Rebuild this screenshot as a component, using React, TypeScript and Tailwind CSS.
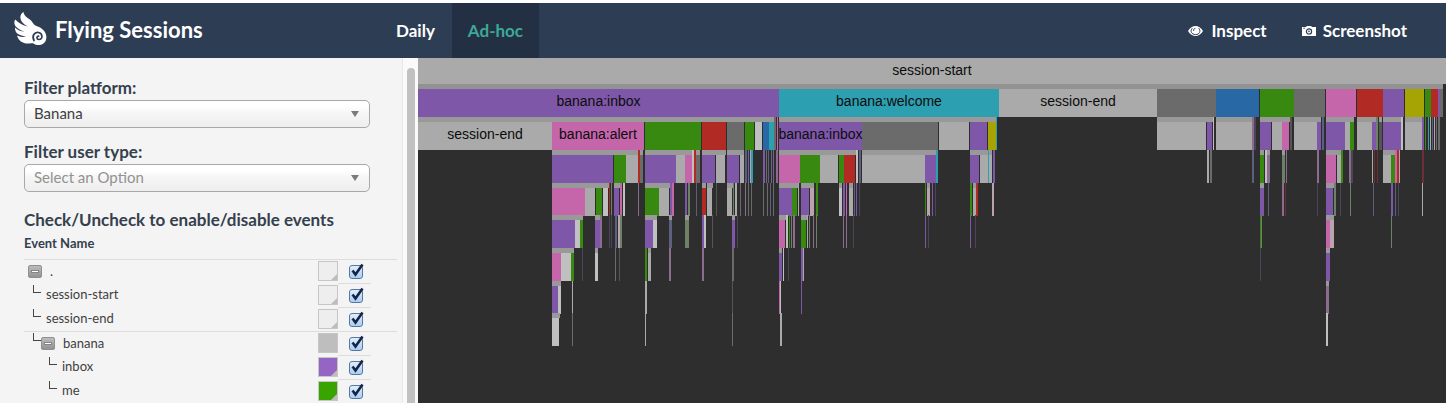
import React, { useState } from "react";

const COLORS = {
  l: "#aaaaaa",
  d: "#6b6b6b",
  p: "#7e57a8",
  k: "#c566ab",
  g: "#37890f",
  r: "#b12a24",
  b: "#2868a5",
  t: "#2c9fb1",
  y: "#a5a404",
  w: "#c0c0c0",
  m: "#8c6c8c",
  s: "#5c5f80",
  o: "#6d8068",
  f: "#4c4459",
  x: "#555555",
  e: "#6e2e36",
  c: "#b9a3ad",
};

type Color = keyof typeof COLORS;
type Bar = [start: number, end: number, color: Color, label?: string];

const DOMAIN = 1028;
const ROW_TOPS = [0, 31, 64, 97, 130, 162, 195, 228, 260];

/* One list per depth; start and end are session shares out of DOMAIN. */
const LEVELS: Bar[][] = [
  [[0, 1028, "l", "session-start"]],
  [
    [0, 361, "p", "banana:inbox"], [361, 581, "t", "banana:welcome"], [581, 739, "l", "session-end"],
    [739, 798, "d"], [798, 841, "b"], [842, 876, "g"], [876, 907, "d"], [908, 938, "k"], [939, 965, "r"],
    [965, 986, "p"], [987, 1006, "y"], [1007, 1013, "g"], [1013, 1020, "r"], [1020, 1022, "p"], [1022, 1025, "d"],
  ],
  [
    [0, 134, "l", "session-end"], [134, 226, "k", "banana:alert"], [227, 283, "g"], [284, 308, "r"], [309, 326, "d"],
    [327, 336, "g"], [337, 344, "w"], [345, 351, "b"], [351, 356, "t"], [356, 358, "d"], [359, 360, "k"],
    [361, 444, "p", "banana:inbox"], [444, 520, "d"], [521, 551, "l"], [552, 569, "p"], [570, 578, "y"], [578, 579, "t"],
    [739, 788, "l"], [789, 794, "p"], [795, 796, "w"], [798, 834, "l"], [834, 836, "m"], [836, 838, "f"],
    [842, 853, "p"], [854, 864, "l"], [864, 871, "k"], [872, 874, "x"], [876, 899, "l"], [899, 903, "p"], [904, 906, "s"],
    [908, 927, "p"], [927, 932, "l"], [932, 936, "g"], [939, 954, "l"], [954, 958, "p"], [958, 960, "o"], [961, 964, "x"],
    [965, 983, "p"], [983, 985, "w"], [987, 1004, "l"], [1004, 1006, "p"], [1007, 1008, "g"], [1010, 1011, "t"],
    [1012, 1013, "l"], [1014, 1015, "s"], [1016, 1017, "c"], [1018, 1019, "d"], [1020, 1022, "d"],
  ],
  [
    [134, 195, "p"], [196, 208, "g"], [208, 220, "l"], [220, 222, "r"], [222, 225, "d"],
    [227, 258, "p"], [258, 267, "l"], [267, 274, "k"], [274, 276, "w"], [276, 278, "r"], [278, 282, "d"],
    [284, 297, "p"], [298, 307, "l"], [309, 321, "p"], [322, 326, "l"], [327, 329, "s"], [330, 331, "p"],
    [332, 333, "l"], [333, 335, "t"], [345, 347, "p"], [348, 349, "d"], [350, 351, "s"], [353, 354, "d"], [355, 356, "p"], [358, 360, "m"],
    [361, 382, "k"], [382, 402, "g"], [402, 420, "l"], [421, 426, "g"], [426, 437, "r"], [438, 440, "w"], [441, 443, "s"],
    [444, 507, "l"], [507, 518, "p"], [518, 520, "t"], [552, 561, "p"], [562, 570, "l"], [570, 571, "t"], [571, 574, "l"], [575, 577, "p"],
    [789, 791, "l"], [792, 794, "d"], [834, 836, "s"], [842, 846, "g"], [847, 849, "w"], [849, 852, "m"],
    [864, 867, "o"], [868, 869, "m"], [899, 901, "m"], [908, 918, "k"], [919, 923, "l"], [923, 925, "g"],
    [931, 933, "m"], [933, 935, "f"], [954, 955, "l"], [956, 957, "e"], [959, 960, "e"],
    [965, 973, "l"], [973, 977, "g"], [977, 979, "k"], [979, 981, "r"], [981, 982, "l"], [1004, 1006, "e"],
  ],
  [
    [134, 167, "k"], [167, 177, "l"], [178, 184, "g"], [185, 190, "w"], [191, 192, "r"], [193, 194, "o"],
    [196, 201, "p"], [202, 204, "k"], [205, 207, "w"], [220, 221, "m"],
    [227, 241, "g"], [241, 251, "l"], [252, 254, "p"], [254, 256, "k"], [267, 269, "p"], [270, 272, "o"],
    [278, 279, "s"], [284, 288, "r"], [289, 294, "l"], [298, 299, "x"], [309, 314, "l"], [315, 316, "o"], [317, 319, "l"],
    [322, 323, "d"], [327, 328, "m"], [330, 331, "d"], [333, 334, "d"], [345, 346, "d"], [349, 350, "d"], [352, 353, "s"], [355, 356, "d"],
    [361, 374, "p"], [374, 379, "g"], [380, 381, "l"], [383, 391, "p"], [392, 396, "c"], [398, 400, "g"],
    [421, 424, "w"], [425, 427, "p"], [428, 429, "k"], [431, 435, "l"], [436, 437, "s"], [438, 439, "p"], [441, 442, "f"],
    [507, 508, "g"], [509, 512, "c"], [514, 515, "p"], [517, 518, "f"], [552, 554, "g"], [555, 558, "l"], [558, 560, "r"], [574, 576, "c"],
    [842, 846, "p"], [850, 851, "s"], [864, 866, "m"], [867, 868, "e"], [899, 900, "f"], [908, 915, "p"], [916, 918, "o"],
    [922, 923, "f"], [932, 933, "o"], [955, 956, "s"], [973, 975, "p"], [977, 978, "s"], [980, 981, "f"], [1004, 1005, "l"],
  ],
  [
    [134, 157, "p"], [157, 162, "w"], [162, 165, "g"], [177, 182, "p"], [182, 184, "m"], [191, 192, "f"], [193, 194, "f"],
    [197, 199, "s"], [200, 202, "c"], [202, 204, "o"], [227, 235, "p"], [235, 239, "w"], [251, 254, "s"], [267, 271, "o"],
    [284, 286, "p"], [286, 288, "w"], [294, 295, "x"], [314, 317, "p"], [319, 320, "f"],
    [361, 367, "k"], [368, 370, "w"], [371, 372, "g"], [373, 374, "o"], [375, 377, "m"],
    [383, 388, "g"], [389, 390, "l"], [391, 392, "o"], [395, 396, "m"], [398, 399, "o"],
    [425, 426, "m"], [428, 429, "m"], [435, 436, "f"], [507, 508, "p"], [510, 511, "f"], [552, 553, "p"], [557, 558, "f"],
    [842, 843, "g"], [843, 844, "o"], [908, 912, "k"], [912, 916, "c"], [973, 974, "o"],
  ],
  [
    [134, 143, "k"], [143, 153, "w"], [153, 156, "g"], [164, 165, "f"], [177, 180, "w"], [197, 198, "d"], [201, 202, "x"],
    [227, 229, "g"], [230, 233, "l"], [251, 253, "m"], [284, 286, "m"], [314, 316, "d"],
    [361, 364, "p"], [365, 366, "w"], [370, 371, "f"], [383, 385, "p"], [385, 386, "l"], [842, 843, "f"], [908, 912, "p"],
  ],
  [
    [134, 140, "p"], [140, 143, "w"], [154, 155, "l"], [227, 229, "l"], [314, 315, "x"],
    [361, 362, "k"], [362, 363, "w"], [383, 384, "p"], [908, 911, "m"],
  ],
  [[134, 141, "w"], [154, 155, "d"], [227, 228, "l"], [314, 315, "d"], [362, 364, "l"], [908, 910, "w"]],
];

const pct = (n: number) => `${(n / DOMAIN) * 100}%`;

function SessionChart() {
  return (
    <svg className="block h-[345px] w-full font-['Liberation_Sans',sans-serif] text-[14px]" shapeRendering="crispEdges" role="img" aria-label="Session events">
      {LEVELS.map((bars, depth) => {
        const top = ROW_TOPS[depth];
        const height = depth === 0 ? 26 : 28;
        return (
          <g key={depth}>
            {bars.map(([start, end, color]) => (
              <React.Fragment key={start}>
                {depth > 0 && (
                  <rect
                    x={pct(start)}
                    y={top - 5}
                    width={pct(Math.min(end + (end - start > 4 ? 1 : 0), DOMAIN) - start)}
                    height={5}
                    fill={depth === 1 ? "#929292" : end - start > 2 ? "#9a999a" : COLORS[color]}
                  />
                )}
                <rect x={pct(start)} y={top} width={pct(end - start)} height={height} fill={COLORS[color]} />
              </React.Fragment>
            ))}
            {bars.map(
              ([start, end, , label]) =>
                label && (
                  <text key={start} x={pct((start + end) / 2)} y={top + 17} textAnchor="middle" fill="#0c0c0c">
                    {label}
                  </text>
                ),
            )}
          </g>
        );
      })}
    </svg>
  );
}

function WingLogo() {
  return (
    <svg className="h-[34px] w-[34px]" viewBox="0 0 34 34" aria-hidden="true">
      <path
        d="M10.500 0C8 1.500 7 4 7.500 6.500C8 10 11 12.500 15 14.500C10 13.500 5 10.500 2.200 7.500C-.5 12 3 17 11.500 19.500C8 19.500 4.500 18 2 15.500C1.500 21 6 24 13 24.200C10 25.400 7 25 4 23.500C5.500 29 10 32 16.500 31.500C18.500 31.300 19.500 31 20.500 31.500C25 34.500 32 33 33.200 27C34.500 20.500 29 15.500 23.500 14C21 13.300 20 11 18.500 9C16 6 11 5 10.500 0Z"
        fill="#fff"
      />
      <path
        d="M21 28.500C18.500 24 21.500 19.800 25.500 20.500C30 21.500 30 27.500 26 27.500C23.500 27.300 23.300 24.300 25.600 24.200"
        fill="none"
        stroke="#2d3d54"
        strokeWidth="1.700"
        strokeLinecap="round"
      />
    </svg>
  );
}

function EyeIcon() {
  return (
    <svg className="h-3 w-[15px]" viewBox="0 0 15 12" aria-hidden="true">
      <path d="M0 6C2 2.700 4.700 1 7.500 1S13 2.700 15 6C13 9.300 10.300 11 7.500 11S2 9.300 0 6Z" fill="#fff" />
      <path d="M4.300 3.200C1.800 6 3.500 9.500 7.500 9.600S13.200 6 10.700 3.200" fill="none" stroke="#2d3d54" strokeWidth="1" />
      <path d="M7.400 3.300C5.800 3.500 5.300 5 5.700 6" fill="none" stroke="#2d3d54" strokeWidth="1" />
    </svg>
  );
}

function CameraIcon() {
  return (
    <svg className="h-3 w-[14px]" viewBox="0 0 14 12" aria-hidden="true">
      <path d="M0 2H4L5 1H9L10 2H14V11H0Z" fill="#fff" />
      <circle cx="7" cy="6.400" r="2.600" fill="none" stroke="#2d3d54" strokeWidth="1.200" />
      <circle cx="7" cy="6.400" r=".8" fill="#2d3d54" />
      <path d="M1.200 3.200h2" stroke="#2d3d54" strokeWidth=".8" />
    </svg>
  );
}

function Select({ id, label, options, muted }: { id: string; label: string; options: string[]; muted?: boolean }) {
  return (
    <div className="flex flex-col">
      <label htmlFor={id} className="text-[17px] leading-6 font-bold text-[#34404e]">
        {label}
      </label>
      <div className="relative">
        <select
          id={id}
          className={`block h-7 w-full appearance-none rounded-[5px] border border-[#a8a8a8] bg-linear-to-b from-white from-20% via-[#f5f5f5] via-50% to-[#eeeeee] pr-8 pb-[2px] pl-[9px] text-[15px] ${muted ? "text-[#929292]" : "text-[#404040]"}`}
        >
          {options.map((o) => (
            <option key={o}>{o}</option>
          ))}
        </select>
        <svg className="pointer-events-none absolute top-[11px] right-[11px] h-[6px] w-2" viewBox="0 0 8 6" aria-hidden="true">
          <path d="M0 0H8L4 6Z" fill="#7a7a7a" />
        </svg>
      </div>
    </div>
  );
}

function Toggle({ name }: { name: string }) {
  return (
    <button aria-label={`Collapse ${name}`} className="flex h-[13px] w-[14px] items-center justify-center rounded-[2px] border border-[#8f8f8f] bg-linear-to-b from-[#bcbcbc] to-[#939393]">
      <span className="h-[3px] w-2 border border-[#858585] bg-white" />
    </button>
  );
}

const Branch = () => <span className="mb-3 h-[8px] w-[8px] border-b border-l border-[#444444]" />;

type EventRow = { name: string; indent: string; textGap: string; group: boolean; leaf: boolean; swatch: string };

const EVENTS: EventRow[] = [
  { name: ".", indent: "pl-1", textGap: "pl-2", group: true, leaf: false, swatch: "bg-[#eeeeee]" },
  { name: "session-start", indent: "pl-[9px]", textGap: "pl-[5px]", group: false, leaf: true, swatch: "bg-[#eeeeee]" },
  { name: "session-end", indent: "pl-[9px]", textGap: "pl-[5px]", group: false, leaf: true, swatch: "bg-[#eeeeee]" },
  { name: "banana", indent: "pl-[9px]", textGap: "pl-2", group: true, leaf: true, swatch: "bg-[#bebebe]" },
  { name: "inbox", indent: "pl-[25px]", textGap: "pl-[5px]", group: false, leaf: true, swatch: "bg-[#9565c4]" },
  { name: "me", indent: "pl-[25px]", textGap: "pl-[5px]", group: false, leaf: true, swatch: "bg-[#39a400]" },
];

function EventTable() {
  const [enabled, setEnabled] = useState<Record<string, boolean>>(() => Object.fromEntries(EVENTS.map((e) => [e.name, true])));
  return (
    <table className="w-full table-fixed border-collapse text-[13px] text-[#3f3f3f]">
      <colgroup>
        <col />
        <col className="w-5" />
        <col className="w-[33px]" />
        <col className="w-[26px]" />
      </colgroup>
      <thead>
        <tr>
          <th colSpan={4} className="h-[27px] p-0 pb-[3px] text-left font-bold text-[#34404e]">
            Event Name
          </th>
        </tr>
      </thead>
      <tbody>
        {EVENTS.map((e) => {
          const line = e.group ? "border-t border-[#dcdcdc]" : "";
          return (
            <tr key={e.name} className="h-6">
              <td className={`p-0 ${line}`}>
                <div className={`flex h-[23px] items-center ${e.indent}`}>
                  {e.leaf && <Branch />}
                  {e.group && <Toggle name={e.name} />}
                  <label htmlFor={`event-${e.name}`} className={e.textGap}>
                    {e.name}
                  </label>
                </div>
              </td>
              <td className={`p-0 ${line}`}>
                <button aria-label={`Colour of ${e.name}`} className={`relative block h-5 w-5 border border-[#c6c6c6] ${e.swatch}`}>
                  <svg className="absolute right-0 bottom-0 h-[6px] w-[6px]" viewBox="0 0 6 6" aria-hidden="true">
                    <path d="M6 0V6H0Z" fill="#bdbdbd" />
                  </svg>
                </button>
              </td>
              <td className="border-t border-[#dcdcdc] p-0 pt-px">
                <div className="relative ml-[11px] h-[14px] w-[14px]">
                  <input
                    id={`event-${e.name}`}
                    type="checkbox"
                    checked={enabled[e.name]}
                    onChange={(ev) => setEnabled({ ...enabled, [e.name]: ev.target.checked })}
                    className="block h-[14px] w-[14px] appearance-none rounded-[3px] border border-[#56779f] bg-linear-to-b from-[#e4eefa] to-[#a9cdf3]"
                  />
                  {enabled[e.name] && (
                    <svg className="pointer-events-none absolute -top-[2px] left-0 h-4 w-4" viewBox="0 0 16 16" aria-hidden="true">
                      <path d="M3.500 7.500L6.500 11.500L13.500 1.500" fill="none" stroke="#14254a" strokeWidth="2.600" />
                    </svg>
                  )}
                </div>
              </td>
              <td className={`p-0 ${line}`} />
            </tr>
          );
        })}
      </tbody>
    </table>
  );
}

export default function App() {
  return (
    <div className="flex h-screen flex-col overflow-hidden bg-white pt-[3px] font-[Lato,sans-serif]">
      <header className="flex h-[55px] shrink-0 items-stretch bg-[#2d3d54] text-white">
        <a href="#" className="flex w-[379px] items-center gap-2 pb-1 pl-[13px] text-[22px] font-bold">
          <WingLogo />
          <span className="pt-[2px]">Flying Sessions</span>
        </a>
        <nav className="flex flex-1 text-[17px] font-bold">
          <a href="#daily" className="flex items-center px-[17px]">
            Daily
          </a>
          <a href="#adhoc" className="flex items-center bg-[#233044] px-4 text-[#3da896]">
            Ad-hoc
          </a>
          <div className="ml-auto flex gap-[35px] pr-[39px]">
            <a href="#inspect" className="flex items-center gap-2">
              <EyeIcon />
              Inspect
            </a>
            <a href="#screenshot" className="flex items-center gap-[7px]">
              <CameraIcon />
              Screenshot
            </a>
          </div>
        </nav>
      </header>
      <main className="flex min-h-0 flex-1">
        <aside className="flex w-[418px] shrink-0 overflow-hidden bg-[#f4f4f4]">
          <div className="flex flex-1 flex-col pt-[18px] pl-6">
            <div className="flex flex-col gap-3 pr-8">
              <Select id="platform" label="Filter platform:" options={["Banana"]} />
              <Select id="user-type" label="Filter user type:" options={["Select an Option"]} muted />
            </div>
            <h2 className="pt-4 text-[17px] leading-6 font-bold text-[#34404e]">Check/Uncheck to enable/disable events</h2>
            <div className="pr-[5px]">
              <EventTable />
            </div>
          </div>
          <div className="flex w-4 justify-center border-l border-[#e8e8e8] bg-[#fafafa] pt-[10px]">
            <div className="w-2 rounded-t-full bg-[#c1c1c1]" />
          </div>
        </aside>
        <section className="min-w-0 flex-1 bg-[#2e2e2e]">
          <SessionChart />
        </section>
      </main>
    </div>
  );
}
